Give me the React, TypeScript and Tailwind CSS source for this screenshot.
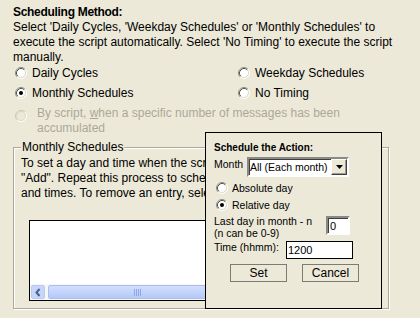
import type { ReactNode } from "react";

// Classic Windows radio button, drawn as two etched rings
function Radio({ checked, disabled }: { checked?: boolean; disabled?: boolean }) {
  const outerTL = disabled ? "#c9c6b6" : "#8d8c87";
  const innerTL = disabled ? "#dcd9c9" : "#55554f";
  return (
    <svg width="12" height="12" viewBox="0 0 12 12" className="block shrink-0">
      <circle cx="6" cy="6" r="4.5" fill={disabled ? "#ECE9D8" : "#fff"} />
      <path d="M2.11 9.89A5.5 5.5 0 0 1 9.89 2.11" stroke={outerTL} fill="none" />
      <path d="M9.89 2.11A5.5 5.5 0 0 1 2.11 9.89" stroke="#fff" fill="none" />
      <path d="M2.82 9.18A4.5 4.5 0 0 1 9.18 2.82" stroke={innerTL} fill="none" />
      <path d="M9.18 2.82A4.5 4.5 0 0 1 2.82 9.18" stroke="#dedbcc" fill="none" />
      {checked && <circle cx="6" cy="6" r="2" fill="#000" />}
    </svg>
  );
}

function RadioRow({ label, checked }: { label: ReactNode; checked?: boolean }) {
  return (
    <label className="flex h-[20px] items-start gap-[5px] pl-[2px]">
      <span className="mt-[2px]">
        <Radio checked={checked} />
      </span>
      <span className="pt-[1px]">{label}</span>
    </label>
  );
}

function SmallRadio({ label, checked }: { label: string; checked?: boolean }) {
  return (
    <label className="flex h-[17px] items-start pl-[2px]">
      <span className="mt-[1px]">
        <Radio checked={checked} />
      </span>
      <span className="ml-[4px] mt-[1px]">{label}</span>
    </label>
  );
}

function Scrollbar() {
  return (
    <div className="flex h-[16px] items-center bg-[#f8f7f2] px-[1px]">
      <div className="flex h-[14px] w-[14px] items-center justify-center rounded-[2px] border border-[#b7caf5] bg-[#c5d5fc]">
        <svg width="8" height="9" viewBox="0 0 8 9">
          <path d="M5.5 1 L2.5 4.5 L5.5 8" stroke="#4d6185" strokeWidth="2" fill="none" />
        </svg>
      </div>
      <div className="ml-[3px] flex h-[14px] w-[178px] items-center justify-center gap-[1px] rounded-[2px] border border-[#a9bef2] bg-gradient-to-b from-[#d2defd] to-[#b5c9f8]">
        <span className="h-[7px] w-[1px] bg-[#8ea7ea]" />
        <span className="h-[7px] w-[1px] bg-[#8ea7ea]" />
        <span className="h-[7px] w-[1px] bg-[#8ea7ea]" />
        <span className="h-[7px] w-[1px] bg-[#8ea7ea]" />
      </div>
    </div>
  );
}

function MonthSelect() {
  return (
    <div className="flex h-[20px] w-[102px] items-center border-2 border-t-[#8a8a85] border-l-[#8a8a85] border-b-white border-r-white bg-white shadow-[inset_1px_1px_0_#404040]">
      <span className="flex-1 pl-[1px] leading-[16px]">All (Each month)</span>
      <div className="flex h-[16px] w-[16px] items-center justify-center border border-t-white border-l-white border-b-[#404040] border-r-[#404040] bg-[#ECE9D8] shadow-[inset_-1px_-1px_0_#9d9b90]">
        <svg width="7" height="4" viewBox="0 0 7 4">
          <path d="M0 0 H7 L3.5 4 Z" fill="#000" />
        </svg>
      </div>
    </div>
  );
}

export default function App() {
  return (
    <div className="relative h-[318px] w-[420px] overflow-hidden bg-[#ECE9D8] pl-[13px] pt-[5px] font-['Liberation_Sans',Arial,sans-serif] text-[12px] leading-[15px] text-black">
      <div className="font-bold tracking-[-0.3px]">Scheduling Method:</div>
      <p>
        Select 'Daily Cycles, 'Weekday Schedules' or 'Monthly Schedules' to
        <br />
        execute the script automatically. Select 'No Timing' to execute the script
        <br />
        manually.
      </p>

      <div className="grid grid-cols-[223px_1fr]">
        <RadioRow label="Daily Cycles" />
        <RadioRow label="Weekday Schedules" />
        <RadioRow label="Monthly Schedules" checked />
        <RadioRow label="No Timing" />
      </div>
      <div className="flex items-start pl-[2px] text-[#aca899]">
        <span className="mt-[5px]">
          <Radio disabled />
        </span>
        <span className="ml-[10px] pt-[1px]">
          By script, <u>w</u>hen a specific number of messages has been
          <br />
          accumulated
        </span>
      </div>

      {/* Monthly Schedules group box */}
      <div className="mt-[11px] h-[162px] w-[376px] border border-[#aca899] pl-[7px] shadow-[inset_1px_1px_0_#fff,1px_1px_0_#fff]">
        <div className="-mt-[8px] flex">
          <span className="bg-[#ECE9D8] px-[1px]">Monthly Schedules</span>
        </div>
        <p className="mt-[1px]">
          To set a day and time when the script should run, select
          <br />
          "Add". Repeat this process to schedule additional days
          <br />
          and times. To remove an entry, select it and click "Remove".
        </p>
        <div className="ml-[8px] mt-[19px] flex h-[81px] w-[341px] flex-col justify-end border border-black bg-white">
          <Scrollbar />
        </div>
      </div>

      {/* floating "Schedule the Action" panel */}
      <div className="absolute left-[205px] top-[132px] h-[177px] w-[177px] border border-black bg-[#ECE9D8] pl-[8px] pt-[8px] text-[10.5px] leading-[13px]">
        <div className="text-[10px] font-bold">Schedule the Action:</div>
        <div className="mt-[3px] flex h-[20px] items-start">
          <span className="mt-[1px] w-[33px]">Month</span>
          <MonthSelect />
        </div>
        <div className="mt-[4px]">
          <SmallRadio label="Absolute day" />
          <SmallRadio label="Relative day" checked />
        </div>
        <div className="flex items-start">
          <div className="w-[112px] leading-[12px]">
            Last day in month - n
            <br />
            (n can be 0-9)
          </div>
          <input
            readOnly
            value="0"
            className="mt-[1px] h-[19px] w-[24px] border-2 border-t-[#8a8a85] border-l-[#8a8a85] border-b-white border-r-white bg-white p-0 pl-[2px] text-[11px] shadow-[inset_1px_1px_0_#404040] outline-none"
          />
        </div>
        <div className="mt-[1px] flex items-start">
          <span className="mt-[1px] w-[72px]">Time (hhmm):</span>
          <input
            readOnly
            value="1200"
            className="mt-[1px] h-[18px] w-[67px] border border-black bg-white p-0 pl-[1px] text-[11px] outline-none"
          />
        </div>
        <div className="mt-[5px] flex justify-center gap-[15px] pr-[6px]">
          <button className="h-[18px] w-[57px] border border-[#7c7b76] bg-[#ECE9D8] text-[12px] leading-[16px]">
            Set
          </button>
          <button className="h-[18px] w-[57px] border border-[#7c7b76] bg-[#ECE9D8] text-[12px] leading-[16px]">
            Cancel
          </button>
        </div>
      </div>
    </div>
  );
}
